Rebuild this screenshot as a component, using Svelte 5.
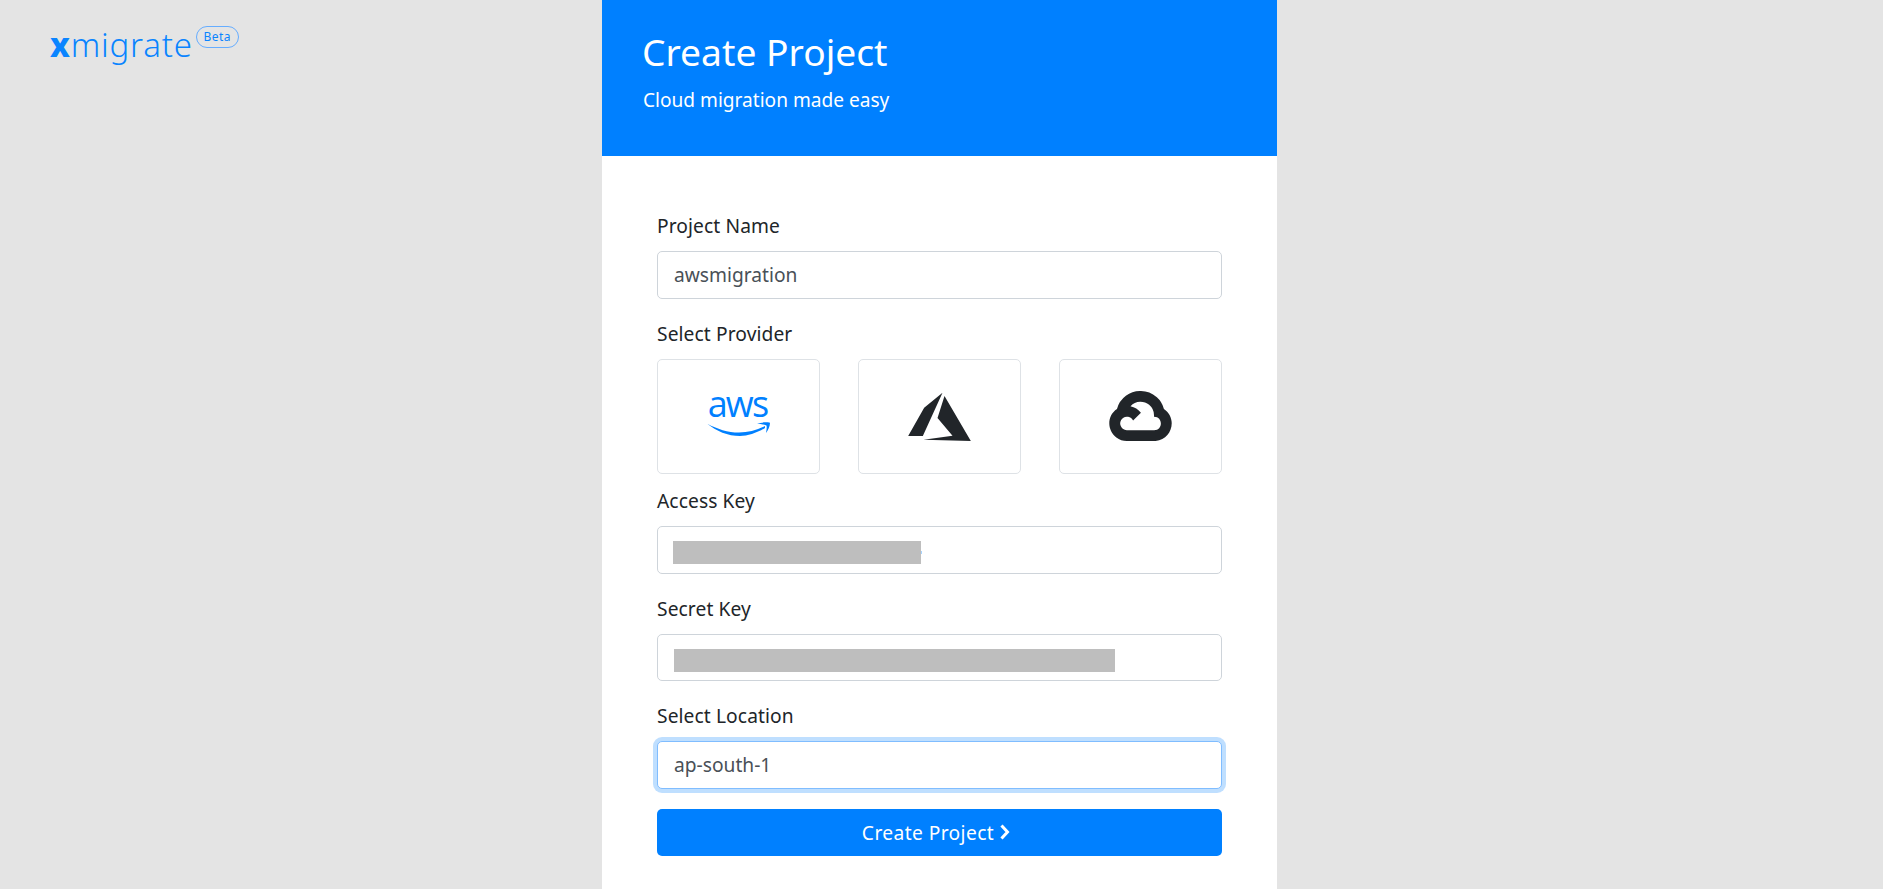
<script>
	let projectName = $state('awsmigration');
	let location = $state('ap-south-1');
</script>

<div class="page">
	<div class="logo">
		<span class="word"><b>x</b>migrate</span>
		<span class="beta">Beta</span>
	</div>

	<main class="card">
		<header class="head">
			<h1>Create Project</h1>
			<p>Cloud migration made easy</p>
		</header>

		<form class="form" onsubmit={(e) => e.preventDefault()}>
			<label for="name">Project Name</label>
			<input id="name" bind:value={projectName} />

			<div class="label-row">Select Provider</div>
			<div class="providers">
				<button type="button" class="provider aws">
					<span class="aws-word">aws</span>
					<svg viewBox="0 26 70 16" width="70" height="16" aria-hidden="true">
						<path d="M3.300 27.700C12 35 24 40 36 40c8 0 17-3 25-8v-2c-8 4-17 6.500-26 6.500-11 0-22-3.500-31.700-8.800z" fill="#0080ff" />
						<path d="M53 27.500c4-1 9-1.500 13-.8 0 3.300-2 7.800-4 10.300.5-3 1-5.500.5-7.500-2.500-1-6.500-1.500-9.500-2z" fill="#0080ff" />
					</svg>
				</button>
				<button type="button" class="provider" aria-label="Azure">
					<svg viewBox="174 125 188 147" width="63" height="49">
						<path fill="#212529" d="M277 127l-55 45-48 85h44zM283 137l-21 66 45 53-87 12 142 4z" />
					</svg>
				</button>
				<button type="button" class="provider" aria-label="Google Cloud">
					<svg viewBox="0 2.380 24 19.220" width="63" height="50">
						<path fill="#212529" d="M12.190 2.380a9.344 9.344 0 0 0-9.234 6.893c.053-.02-.055.013 0 0-3.875 2.551-3.922 8.110-.247 10.941l.006-.007-.007.030a6.717 6.717 0 0 0 4.077 1.356h5.173l.030.030h5.192c6.687.053 9.376-8.605 3.835-12.350a9.365 9.365 0 0 0-2.821-4.552l-.043.043.006-.050A9.344 9.344 0 0 0 12.190 2.380zm-.358 4.146c1.244-.040 2.518.368 3.486 1.150a5.186 5.186 0 0 1 1.862 4.078v.518c3.530-.070 3.530 5.262 0 5.193h-5.193l-.008.009v-.040H6.785a2.590 2.590 0 0 1-1.067-.230h.001a2.597 2.597 0 1 1 3.437-3.437l3.013-3.012A6.747 6.747 0 0 0 8.110 8.240c.018-.010.040-.026.054-.023a5.186 5.186 0 0 1 3.670-1.690z" />
					</svg>
				</button>
			</div>

			<label for="access" class="after-cards">Access Key</label>
			<div class="secret">
				<input id="access" value="" />
				<span class="mask access-mask"></span>
			</div>

			<label for="secret">Secret Key</label>
			<div class="secret">
				<input id="secret" value="" />
				<span class="mask secret-mask"></span>
			</div>

			<label for="location">Select Location</label>
			<input id="location" class="focused" bind:value={location} />

			<button type="submit" class="submit">
				<span>Create Project</span>
				<svg viewBox="0 0 12 16" width="12" height="16">
					<path d="M2.500 1.500l6 6.500-6 6.500" fill="none" stroke="#fff" stroke-width="3" />
				</svg>
			</button>
		</form>
	</main>
</div>

<style>
	:global(body) {
		margin: 0;
		background: #e4e4e4;
		font-family: 'Noto Sans', sans-serif;
		color: #212529;
		overflow: hidden;
	}

	.page {
		position: relative;
		display: flex;
		justify-content: center;
		height: 889px;
		overflow: hidden;
	}

	.logo {
		position: absolute;
		top: 26px;
		left: 50px;
		display: flex;
		align-items: flex-start;
		gap: 3px;
		color: #0a84ff;
	}

	.word {
		font-size: 33px;
		font-weight: 300;
		line-height: 38px;
		letter-spacing: 0.8px;
	}

	.word b {
		font-weight: 800;
	}

	.beta {
		border: 1px solid #66adff;
		border-radius: 11px;
		width: 41px;
		height: 20px;
		font-size: 12px;
		line-height: 20px;
		text-align: center;
		letter-spacing: 0.5px;
	}

	.card {
		width: 675px;
		height: 889px;
		background: #fff;
		margin-right: 4px;
	}

	.head {
		box-sizing: border-box;
		height: 156px;
		background: #0080ff;
		color: #fff;
		padding: 28px 41px 0;
	}

	h1 {
		margin: 0 0 0 -1px;
		font-size: 37.200px;
		font-weight: 400;
		line-height: 48px;
	}

	p {
		margin: 12px 0 0;
		font-size: 19.100px;
		line-height: 24px;
	}

	.form {
		display: flex;
		flex-direction: column;
		padding: 0 55px;
	}

	label,
	.label-row {
		display: block;
		font-size: 19.200px;
		line-height: 26px;
		letter-spacing: 0.1px;
		margin: 22px 0 12px;
	}

	.form > label:first-child {
		margin-top: 57px;
	}

	.label-row {
		margin: 22px 0 12.500px;
	}

	label.after-cards {
		margin-top: 14.500px;
	}

	input {
		box-sizing: border-box;
		display: block;
		width: 100%;
		height: 47.500px;
		padding: 0 16px;
		border: 1px solid #ced4da;
		border-radius: 5px;
		background: #fff;
		font: inherit;
		font-size: 19.200px;
		color: #495057;
		outline: none;
	}

	input.focused {
		border-color: #80bdff;
		box-shadow: 0 0 0 4px rgba(0, 128, 255, 0.25);
	}

	.providers {
		display: grid;
		grid-template-columns: repeat(3, 163px);
		justify-content: space-between;
	}

	.provider {
		display: flex;
		align-items: center;
		justify-content: center;
		height: 114.500px;
		padding: 0;
		background: #fff;
		border: 1px solid #dee2e6;
		border-radius: 5px;
	}

	.provider.aws {
		flex-direction: column;
	}

	.provider.aws svg {
		margin-bottom: 8px;
	}

	.aws-word {
		margin-left: -2px;
		font-family: 'Open Sans', sans-serif;
		font-size: 36px;
		font-weight: 500;
		line-height: 36px;
		letter-spacing: -1.800px;
		color: #0080ff;
	}

	.secret {
		position: relative;
	}

	.mask {
		position: absolute;
		top: 15px;
		height: 23px;
		background: #bebebe;
	}

	.access-mask {
		left: 16px;
		width: 248px;
	}

	/* sliver of the selected value that the mask leaves showing */
	.access-mask::after {
		content: '';
		position: absolute;
		top: 10px;
		right: -1px;
		width: 1px;
		height: 3px;
		background: #a8d4ff;
	}

	.secret-mask {
		left: 17px;
		width: 441px;
	}

	.submit {
		display: flex;
		align-items: center;
		justify-content: center;
		gap: 5px;
		height: 47px;
		margin-top: 20px;
		padding: 0 6px 0 0;
		background: #0080ff;
		color: #fff;
		border: 0;
		border-radius: 5px;
		font: inherit;
		font-size: 19.200px;
		letter-spacing: 0.4px;
	}
</style>
